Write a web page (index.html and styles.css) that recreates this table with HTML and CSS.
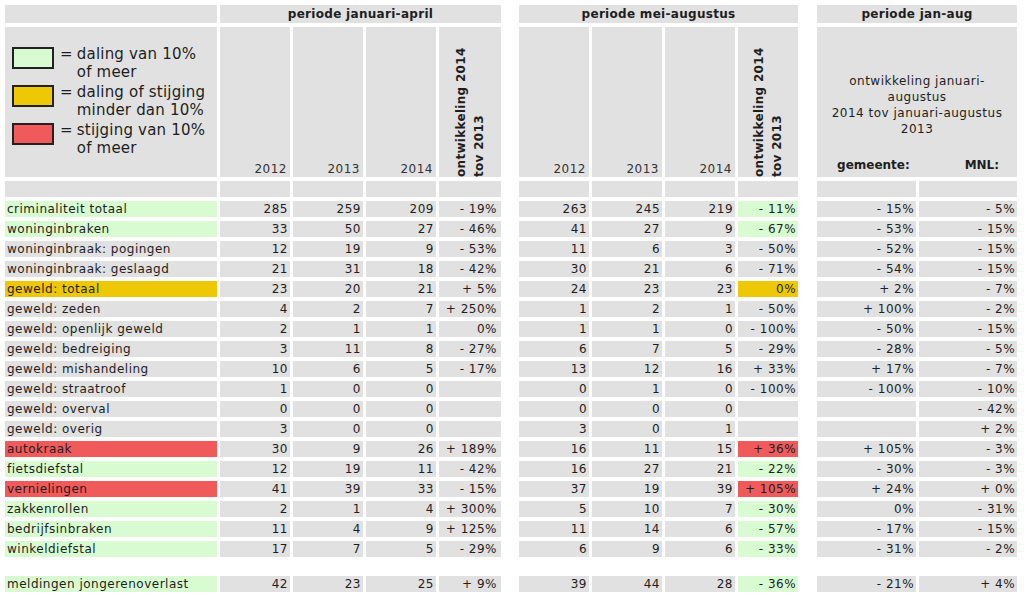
FILE: index.html
```html
<!DOCTYPE html>
<html lang="nl">
<head>
  <meta charset="UTF-8">
  <title>Criminaliteit 2012-2014</title>
  <link rel="stylesheet" href="styles.css">
</head>
<body>

<table class="stats">
  <colgroup>
    <col style="width:212px">
    <col style="width:70px"><col style="width:70px"><col style="width:70px"><col style="width:62px">
    <col style="width:12px">
    <col style="width:70px"><col style="width:70px"><col style="width:70px"><col style="width:60px">
    <col style="width:13px">
    <col style="width:99px"><col style="width:98px">
  </colgroup>
  <thead>
    <tr class="period">
      <td></td>
      <td colspan="4">periode januari-april</td>
      <td class="sp"></td>
      <td colspan="4">periode mei-augustus</td>
      <td class="sp"></td>
      <td colspan="2">periode jan-aug</td>
    </tr>
    <tr class="heads">
      <td class="legend-cell">
        <div class="legend">
          <div class="key">
            <span class="swatch green"></span><span class="eq">=</span>
            <span class="key-txt">daling van 10%<br>of meer</span>
          </div>
          <div class="key">
            <span class="swatch yellow"></span><span class="eq">=</span>
            <span class="key-txt">daling of stijging<br>minder dan 10%</span>
          </div>
          <div class="key">
            <span class="swatch red"></span><span class="eq">=</span>
            <span class="key-txt">stijging van 10%<br>of meer</span>
          </div>
        </div>
      </td>
      <td class="year"><div class="year-txt">2012</div></td>
      <td class="year"><div class="year-txt">2013</div></td>
      <td class="year"><div class="year-txt">2014</div></td>
      <td class="rot-cell"><div class="rot">ontwikkeling 2014<br>tov 2013</div></td>
      <td class="sp"></td>
      <td class="year"><div class="year-txt">2012</div></td>
      <td class="year"><div class="year-txt">2013</div></td>
      <td class="year"><div class="year-txt">2014</div></td>
      <td class="rot-cell"><div class="rot">ontwikkeling 2014<br>tov 2013</div></td>
      <td class="sp"></td>
      <td class="total-head" colspan="2">
        <div class="total-desc">ontwikkeling januari-<br>augustus<br>2014 tov januari-augustus<br>2013</div>
        <div class="total-cols"><span>gemeente:</span><span>MNL:</span></div>
      </td>
    </tr>
    <tr class="blank">
      <td></td><td></td><td></td><td></td><td></td>
      <td class="sp"></td>
      <td></td><td></td><td></td><td></td>
      <td class="sp"></td>
      <td></td><td></td>
    </tr>
  </thead>
  <tbody>
    <tr>
      <td class="lbl green">criminaliteit totaal</td>
      <td>285</td><td>259</td><td>209</td><td class="ontw">- 19%</td><td class="sp"></td>
      <td>263</td><td>245</td><td>219</td><td class="green">- 11%</td><td class="sp"></td>
      <td>- 15%</td><td>- 5%</td>
    </tr>
    <tr>
      <td class="lbl green">woninginbraken</td>
      <td>33</td><td>50</td><td>27</td><td class="ontw">- 46%</td><td class="sp"></td>
      <td>41</td><td>27</td><td>9</td><td class="green">- 67%</td><td class="sp"></td>
      <td>- 53%</td><td>- 15%</td>
    </tr>
    <tr>
      <td class="lbl">woninginbraak: pogingen</td>
      <td>12</td><td>19</td><td>9</td><td class="ontw">- 53%</td><td class="sp"></td>
      <td>11</td><td>6</td><td>3</td><td>- 50%</td><td class="sp"></td>
      <td>- 52%</td><td>- 15%</td>
    </tr>
    <tr>
      <td class="lbl">woninginbraak: geslaagd</td>
      <td>21</td><td>31</td><td>18</td><td class="ontw">- 42%</td><td class="sp"></td>
      <td>30</td><td>21</td><td>6</td><td>- 71%</td><td class="sp"></td>
      <td>- 54%</td><td>- 15%</td>
    </tr>
    <tr>
      <td class="lbl yellow">geweld: totaal</td>
      <td>23</td><td>20</td><td>21</td><td class="ontw">+ 5%</td><td class="sp"></td>
      <td>24</td><td>23</td><td>23</td><td class="yellow">0%</td><td class="sp"></td>
      <td>+ 2%</td><td>- 7%</td>
    </tr>
    <tr>
      <td class="lbl">geweld: zeden</td>
      <td>4</td><td>2</td><td>7</td><td class="ontw">+ 250%</td><td class="sp"></td>
      <td>1</td><td>2</td><td>1</td><td>- 50%</td><td class="sp"></td>
      <td>+ 100%</td><td>- 2%</td>
    </tr>
    <tr>
      <td class="lbl">geweld: openlijk geweld</td>
      <td>2</td><td>1</td><td>1</td><td class="ontw">0%</td><td class="sp"></td>
      <td>1</td><td>1</td><td>0</td><td>- 100%</td><td class="sp"></td>
      <td>- 50%</td><td>- 15%</td>
    </tr>
    <tr>
      <td class="lbl">geweld: bedreiging</td>
      <td>3</td><td>11</td><td>8</td><td class="ontw">- 27%</td><td class="sp"></td>
      <td>6</td><td>7</td><td>5</td><td>- 29%</td><td class="sp"></td>
      <td>- 28%</td><td>- 5%</td>
    </tr>
    <tr>
      <td class="lbl">geweld: mishandeling</td>
      <td>10</td><td>6</td><td>5</td><td class="ontw">- 17%</td><td class="sp"></td>
      <td>13</td><td>12</td><td>16</td><td>+ 33%</td><td class="sp"></td>
      <td>+ 17%</td><td>- 7%</td>
    </tr>
    <tr>
      <td class="lbl">geweld: straatroof</td>
      <td>1</td><td>0</td><td>0</td><td class="ontw"></td><td class="sp"></td>
      <td>0</td><td>1</td><td>0</td><td>- 100%</td><td class="sp"></td>
      <td>- 100%</td><td>- 10%</td>
    </tr>
    <tr>
      <td class="lbl">geweld: overval</td>
      <td>0</td><td>0</td><td>0</td><td class="ontw"></td><td class="sp"></td>
      <td>0</td><td>0</td><td>0</td><td></td><td class="sp"></td>
      <td></td><td>- 42%</td>
    </tr>
    <tr>
      <td class="lbl">geweld: overig</td>
      <td>3</td><td>0</td><td>0</td><td class="ontw"></td><td class="sp"></td>
      <td>3</td><td>0</td><td>1</td><td></td><td class="sp"></td>
      <td></td><td>+ 2%</td>
    </tr>
    <tr>
      <td class="lbl red">autokraak</td>
      <td>30</td><td>9</td><td>26</td><td class="ontw">+ 189%</td><td class="sp"></td>
      <td>16</td><td>11</td><td>15</td><td class="red">+ 36%</td><td class="sp"></td>
      <td>+ 105%</td><td>- 3%</td>
    </tr>
    <tr>
      <td class="lbl green">fietsdiefstal</td>
      <td>12</td><td>19</td><td>11</td><td class="ontw">- 42%</td><td class="sp"></td>
      <td>16</td><td>27</td><td>21</td><td class="green">- 22%</td><td class="sp"></td>
      <td>- 30%</td><td>- 3%</td>
    </tr>
    <tr>
      <td class="lbl red">vernielingen</td>
      <td>41</td><td>39</td><td>33</td><td class="ontw">- 15%</td><td class="sp"></td>
      <td>37</td><td>19</td><td>39</td><td class="red">+ 105%</td><td class="sp"></td>
      <td>+ 24%</td><td>+ 0%</td>
    </tr>
    <tr>
      <td class="lbl green">zakkenrollen</td>
      <td>2</td><td>1</td><td>4</td><td class="ontw">+ 300%</td><td class="sp"></td>
      <td>5</td><td>10</td><td>7</td><td class="green">- 30%</td><td class="sp"></td>
      <td>0%</td><td>- 31%</td>
    </tr>
    <tr>
      <td class="lbl green">bedrijfsinbraken</td>
      <td>11</td><td>4</td><td>9</td><td class="ontw">+ 125%</td><td class="sp"></td>
      <td>11</td><td>14</td><td>6</td><td class="green">- 57%</td><td class="sp"></td>
      <td>- 17%</td><td>- 15%</td>
    </tr>
    <tr>
      <td class="lbl green">winkeldiefstal</td>
      <td>17</td><td>7</td><td>5</td><td class="ontw">- 29%</td><td class="sp"></td>
      <td>6</td><td>9</td><td>6</td><td class="green">- 33%</td><td class="sp"></td>
      <td>- 31%</td><td>- 2%</td>
    </tr>
    <tr class="gap"><td colspan="13"></td></tr>
    <tr>
      <td class="lbl green">meldingen jongerenoverlast</td>
      <td>42</td><td>23</td><td>25</td><td class="ontw">+ 9%</td><td class="sp"></td>
      <td>39</td><td>44</td><td>28</td><td class="green">- 36%</td><td class="sp"></td>
      <td>- 21%</td><td>+ 4%</td>
    </tr>
  </tbody>
</table>

</body>
</html>
```

FILE: styles.css
```css
body {
    margin: 0;
    padding: 0;
    background: #fff;
    color: #1e1e1e;
    font-family: "DejaVu Sans", sans-serif;
    font-size: 12px;
    letter-spacing: 0.5px;
}

.stats {
    border-collapse: separate;
    border-spacing: 3px 4px;
    table-layout: fixed;
    width: 1018px;
    margin: 1px 0 0 2px;
}

.stats td {
    background-color: #e1e1e1;
    padding: 0 2px;
    white-space: nowrap;
    overflow: hidden;
}

.stats td.sp {
    background: none;
}

/* header rows */
.period td {
    height: 18px;
    line-height: 18px;
    font-weight: bold;
    text-align: center;
    letter-spacing: 0.3px;
}

.heads td {
    height: 150px;
    padding: 0;
}

.legend-cell {
    vertical-align: top;
    font-size: 15px;
    line-height: 18px;
    letter-spacing: 0.2px;
}

.legend {
    padding-top: 18px;
}

.key {
    display: flex;
    align-items: flex-start;
    margin-bottom: 2px;
    padding-left: 7px;
}

.swatch {
    width: 38px;
    height: 18px;
    margin-top: 2px;
    border: 2px solid #222;
    flex: none;
}

.eq {
    margin: 0 4px 0 6px;
}

.year {
    vertical-align: bottom;
    text-align: right;
    color: #333;
}

.year-txt {
    padding: 0 3px 0 0;
    line-height: 16px;
}

.rot-cell {
    vertical-align: bottom;
}

.rot {
    writing-mode: vertical-rl;
    transform: rotate(180deg);
    height: 148px;
    margin: 0 auto;
    line-height: 18px;
    font-weight: bold;
    letter-spacing: 0.3px;
}

.total-head {
    vertical-align: top;
    text-align: center;
}

.total-desc {
    padding-top: 46px;
    line-height: 16px;
}

.total-cols {
    display: flex;
    justify-content: space-between;
    margin-top: 20px;
    padding: 0 18px 0 20px;
    line-height: 16px;
    font-weight: bold;
    letter-spacing: 0;
}

.blank td {
    height: 16px;
}

/* data rows */
tbody td {
    height: 16px;
    line-height: 16px;
    text-align: right;
}

tbody td.lbl {
    text-align: left;
}

tbody td.ontw {
    padding-right: 4px;
}

.gap td {
    height: 11px;
    background: none !important;
}

.green {
    background-color: #d8fbd1 !important;
}

.yellow {
    background-color: #efc805 !important;
}

.red {
    background-color: #f05a5b !important;
}
```
